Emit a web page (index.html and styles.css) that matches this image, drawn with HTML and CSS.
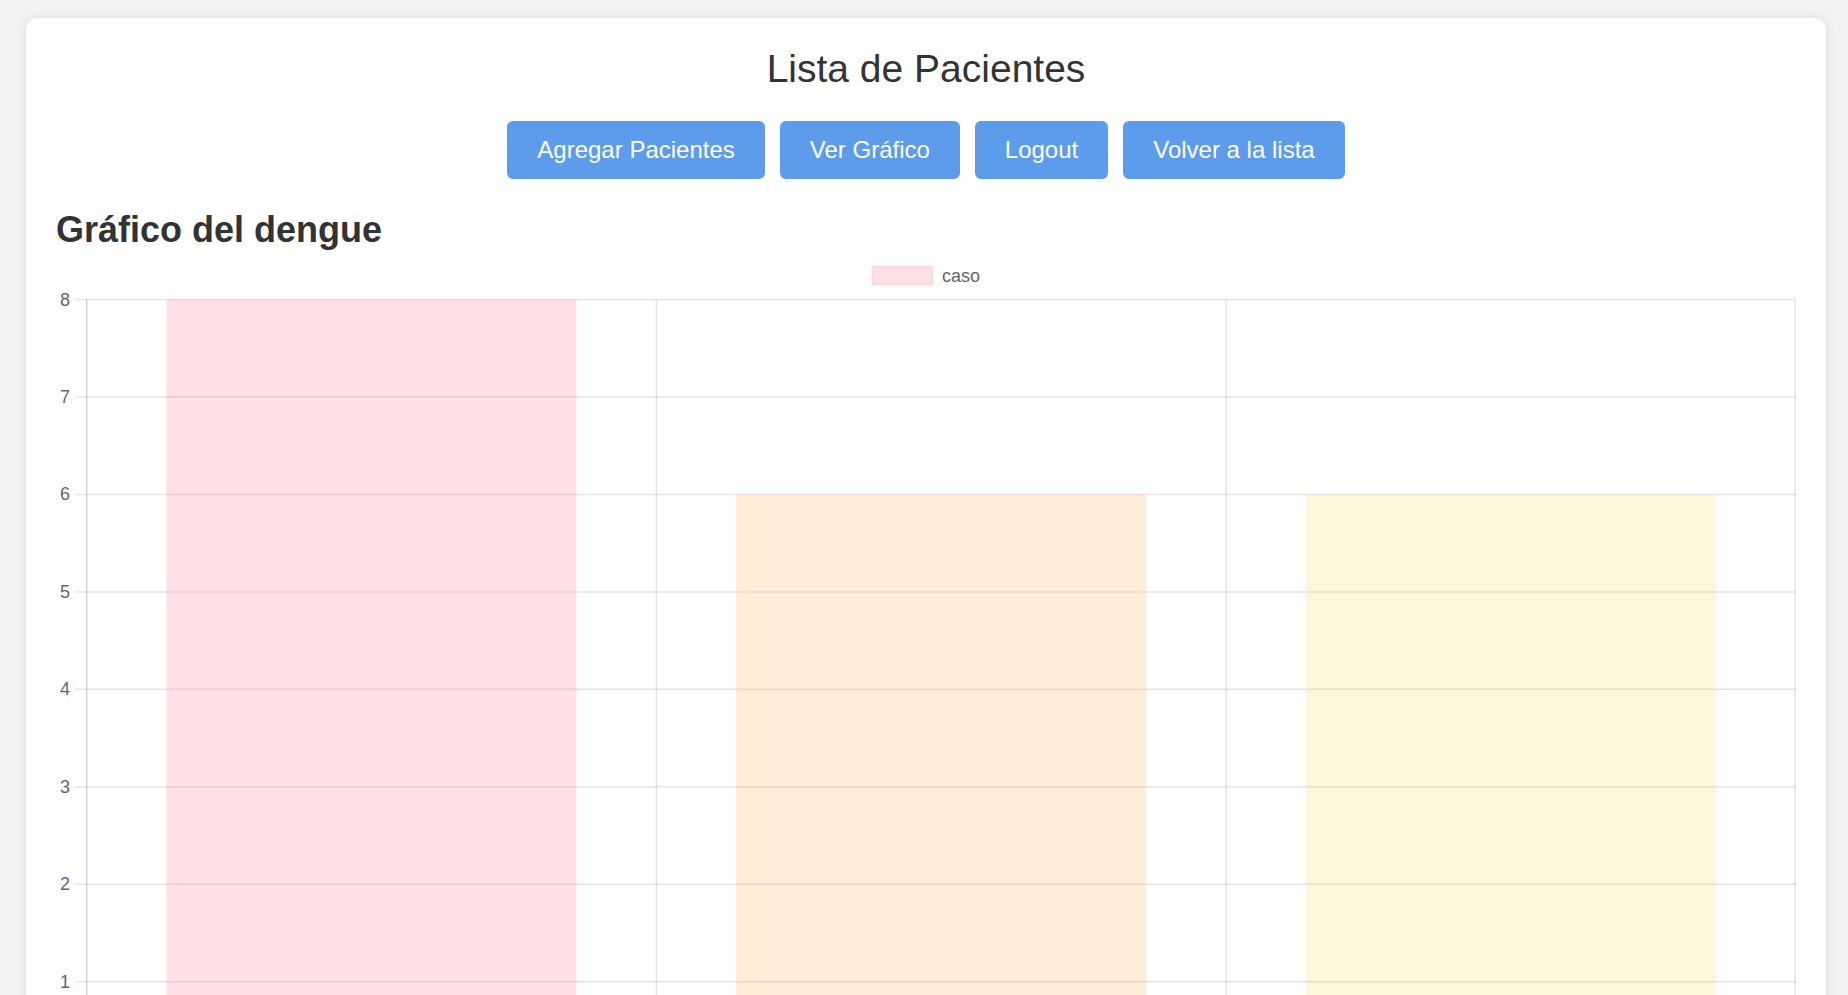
FILE: index.html
```html
<!DOCTYPE html>
<html lang="es">
<head>
<meta charset="utf-8">
<title>Lista de Pacientes</title>
<link rel="stylesheet" href="styles.css">
</head>
<body>
<div class="card">
  <h1 class="title">Lista de Pacientes</h1>
  <div class="actions">
    <button class="btn">Agregar Pacientes</button>
    <button class="btn">Ver Gráfico</button>
    <button class="btn">Logout</button>
    <button class="btn">Volver a la lista</button>
  </div>
  <h2 class="chart-title">Gráfico del dengue</h2>
  <svg class="chart" width="1740" height="900" viewBox="0 0 1740 900" xmlns="http://www.w3.org/2000/svg">
    <!-- legend -->
    <rect x="816.5" y="15.5" width="60" height="18" fill="rgba(255,99,132,0.2)" stroke="rgba(255,99,132,0.2)" stroke-width="1.5"/>
    <text class="legend-text" x="886" y="31">caso</text>

    <!-- grid lines -->
    <g stroke="rgba(0,0,0,0.1)" stroke-width="1.5">
      <line x1="19" y1="48.5" x2="1740" y2="48.5"/>
      <line x1="19" y1="146" x2="1740" y2="146"/>
      <line x1="19" y1="243.4" x2="1740" y2="243.4"/>
      <line x1="19" y1="340.9" x2="1740" y2="340.9"/>
      <line x1="19" y1="438.3" x2="1740" y2="438.3"/>
      <line x1="19" y1="535.8" x2="1740" y2="535.8"/>
      <line x1="19" y1="633.3" x2="1740" y2="633.3"/>
      <line x1="19" y1="730.7" x2="1740" y2="730.7"/>
      <line x1="19" y1="828.2" x2="1740" y2="828.2"/>
      <line x1="30.7" y1="48.5" x2="30.7" y2="843"/>
      <line x1="600.4" y1="48.5" x2="600.4" y2="843"/>
      <line x1="1170.1" y1="48.5" x2="1170.1" y2="843"/>
      <line x1="1739.2" y1="48.5" x2="1739.2" y2="843"/>
    </g>
    <line x1="30.7" y1="48.5" x2="30.7" y2="843" stroke="rgba(0,0,0,0.08)" stroke-width="1.5"/>

    <!-- y tick labels -->
    <g class="tick">
      <text x="14" y="54.5">8</text>
      <text x="14" y="152">7</text>
      <text x="14" y="249.4">6</text>
      <text x="14" y="346.9">5</text>
      <text x="14" y="444.3">4</text>
      <text x="14" y="541.8">3</text>
      <text x="14" y="639.3">2</text>
      <text x="14" y="736.7">1</text>
      <text x="14" y="834.2">0</text>
    </g>

    <!-- bars -->
    <rect x="110.5" y="48.5" width="410" height="779.7" fill="rgba(255,99,132,0.2)"/>
    <rect x="680.2" y="243.4" width="410" height="584.8" fill="rgba(255,159,64,0.2)"/>
    <rect x="1249.9" y="243.4" width="410" height="584.8" fill="rgba(255,205,86,0.2)"/>
  </svg>
</div>
</body>
</html>
```

FILE: styles.css
```css
html, body {
  margin: 0;
  padding: 0;
  overflow: hidden;
}

body {
  background: #f3f3f3;
  font-family: "Liberation Sans", Arial, sans-serif;
  color: #333;
}

.card {
  margin: 18px 22px 0 26px;
  padding: 29px 30px 30px 30px;
  background: #fff;
  border-radius: 12px;
  box-shadow: 0 0 12px rgba(0, 0, 0, 0.1);
}

.title {
  margin: 0 0 30px;
  font-size: 39px;
  font-weight: normal;
  line-height: normal;
  text-align: center;
  color: #333;
}

.actions {
  display: flex;
  justify-content: center;
  gap: 15px;
}

.btn {
  font-family: "Liberation Sans", Arial, sans-serif;
  font-size: 24px;
  line-height: normal;
  color: #fff;
  background: #5d9beb;
  border: none;
  border-radius: 6px;
  padding: 15px 30px;
  margin: 0;
  cursor: pointer;
}

.chart-title {
  margin: 30px 0 0;
  font-size: 36px;
  font-weight: bold;
  line-height: normal;
  color: #333;
}

.chart {
  display: block;
}

.legend-text {
  font-family: "Liberation Sans", Arial, sans-serif;
  font-size: 18px;
  fill: #666;
}

.tick text {
  font-family: "Liberation Sans", Arial, sans-serif;
  font-size: 18px;
  fill: #666;
  text-anchor: end;
}
```
